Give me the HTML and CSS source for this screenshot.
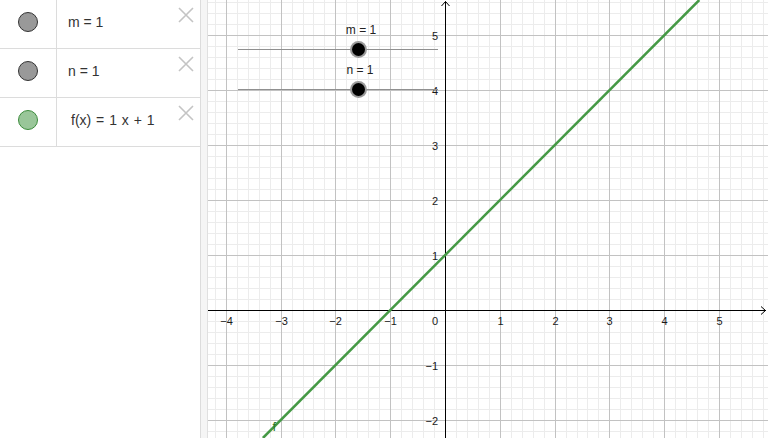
FILE: index.html
```html
<!DOCTYPE html>
<html>
<head>
<meta charset="utf-8">
<link rel="stylesheet" href="styles.css">
</head>
<body>
<div class="app">
  <aside class="algebra">
    <div class="row">
      <div class="marker"><span class="dot dot-gray"></span></div>
      <div class="content">m = 1</div>
      <svg class="close" width="16" height="16" viewBox="0 0 16 16"><path d="M1 1L15 15M15 1L1 15"/></svg>
    </div>
    <div class="row">
      <div class="marker"><span class="dot dot-gray"></span></div>
      <div class="content">n = 1</div>
      <svg class="close" width="16" height="16" viewBox="0 0 16 16"><path d="M1 1L15 15M15 1L1 15"/></svg>
    </div>
    <div class="row">
      <div class="marker"><span class="dot dot-green"></span></div>
      <div class="content content-fx">f(x) = 1 x + 1</div>
      <svg class="close" width="16" height="16" viewBox="0 0 16 16"><path d="M1 1L15 15M15 1L1 15"/></svg>
    </div>
  </aside>
  <div class="splitter"></div>
  <main class="graphics">
    <svg class="plot" width="560" height="438" viewBox="208 0 560 438">
      <path class="grid-minor" d="M215.5 0V438M237.5 0V438M248.5 0V438M259.5 0V438M270.5 0V438M292.5 0V438M303.5 0V438M313.5 0V438M324.5 0V438M346.5 0V438M357.5 0V438M368.5 0V438M379.5 0V438M401.5 0V438M412.5 0V438M423.5 0V438M434.5 0V438M456.5 0V438M467.5 0V438M478.5 0V438M489.5 0V438M511.5 0V438M522.5 0V438M533.5 0V438M544.5 0V438M566.5 0V438M577.5 0V438M587.5 0V438M598.5 0V438M620.5 0V438M631.5 0V438M642.5 0V438M653.5 0V438M675.5 0V438M686.5 0V438M697.5 0V438M708.5 0V438M730.5 0V438M741.5 0V438M752.5 0V438M763.5 0V438
        M208 2.5H768M208 13.5H768M208 24.5H768M208 46.5H768M208 57.5H768M208 68.5H768M208 79.5H768M208 101.5H768M208 112.5H768M208 123.5H768M208 134.5H768M208 156.5H768M208 167.5H768M208 178.5H768M208 189.5H768M208 211.5H768M208 222.5H768M208 233.5H768M208 244.5H768M208 266.5H768M208 277.5H768M208 288.5H768M208 299.5H768M208 321.5H768M208 332.5H768M208 343.5H768M208 354.5H768M208 376.5H768M208 387.5H768M208 398.5H768M208 409.5H768M208 431.5H768"/>
      <path class="grid-major" d="M226.5 0V438M281.5 0V438M335.5 0V438M390.5 0V438M500.5 0V438M555.5 0V438M609.5 0V438M664.5 0V438M719.5 0V438
        M208 35.5H768M208 90.5H768M208 145.5H768M208 200.5H768M208 255.5H768M208 365.5H768M208 420.5H768"/>
      <path class="axis" d="M445.5 1.5V438M208 310.5H766"/>
      <path class="axis-arrow" d="M441.5 6L445.5 1.5L449.5 6M761 306.5L765.5 310.5L761 314.5"/>

      <g class="tick-x">
        <text x="226.5" y="325">−4</text>
        <text x="281.5" y="325">−3</text>
        <text x="335.5" y="325">−2</text>
        <text x="390.5" y="325">−1</text>
        <text x="500.5" y="325">1</text>
        <text x="555.5" y="325">2</text>
        <text x="609.5" y="325">3</text>
        <text x="664.5" y="325">4</text>
        <text x="719.5" y="325">5</text>
      </g>
      <g class="tick-y">
        <text x="438" y="325">0</text>
        <text x="438" y="39.5">5</text>
        <text x="438" y="94.5">4</text>
        <text x="438" y="149.5">3</text>
        <text x="438" y="204.5">2</text>
        <text x="438" y="259.5">1</text>
        <text x="438" y="369.5">−1</text>
        <text x="438" y="424.5">−2</text>
      </g>

      <line class="fn" x1="262.9" y1="438" x2="699.3" y2="0"/>
      <text class="fn-label" x="272.5" y="431">f</text>

      <g class="slider">
        <line class="slider-track" x1="238" y1="49.5" x2="438" y2="49.5"/>
        <circle class="knob-halo" cx="358.5" cy="49.5" r="8.5"/>
        <circle class="knob" cx="358.5" cy="49.5" r="6.5"/>
        <text class="slider-label" x="361" y="34">m = 1</text>
      </g>
      <g class="slider">
        <line class="slider-track" x1="238" y1="89.5" x2="438" y2="89.5"/>
        <circle class="knob-halo" cx="358.5" cy="89.5" r="8.5"/>
        <circle class="knob" cx="358.5" cy="89.5" r="6.5"/>
        <text class="slider-label" x="360" y="74">n = 1</text>
      </g>
    </svg>
  </main>
</div>
</body>
</html>
```

FILE: styles.css
```css
* { box-sizing: border-box; }
html, body {
  margin: 0;
  padding: 0;
  background: #ffffff;
  font-family: "Liberation Sans", Arial, sans-serif;
}
.app {
  display: flex;
  width: 768px;
  height: 438px;
  overflow: hidden;
}
.algebra {
  width: 201px;
  flex: 0 0 201px;
  border-right: 1px solid #dcdcdc;
  background: #ffffff;
}
.row {
  display: flex;
  height: 49px;
  border-bottom: 1px solid #dcdcdc;
}
.marker {
  width: 57px;
  flex: 0 0 57px;
  border-right: 1px solid #dcdcdc;
  padding-top: 12px;
  padding-left: 18px;
}
.dot {
  display: block;
  width: 20px;
  height: 20px;
  border-radius: 50%;
}
.dot-gray {
  background: #999999;
  border: 1px solid #333333;
}
.dot-green {
  background: #99c699;
  border: 1px solid #3c8c3c;
}
.content {
  flex: 1;
  padding-top: 14px;
  padding-left: 11px;
  font-size: 14px;
  line-height: 16px;
  color: #333333;
  white-space: pre;
}
.content-fx {
  padding-top: 14px;
  padding-left: 14px;
  word-spacing: 1px;
}
.close {
  flex: 0 0 16px;
  margin-top: 7px;
  margin-right: 6px;
}
.close path {
  stroke: #c4c4c4;
  stroke-width: 1.6;
  fill: none;
}
.splitter {
  width: 7px;
  flex: 0 0 7px;
  background: #f5f5f5;
  border-right: 1px solid #e0e0e0;
}
.graphics {
  flex: 1;
  position: relative;
  background: #ffffff;
}
.plot {
  display: block;
}
.grid-minor {
  stroke: #ececec;
  stroke-width: 1;
  fill: none;
}
.grid-major {
  stroke: #c2c2c2;
  stroke-width: 1;
  fill: none;
}
.axis {
  stroke: #000000;
  stroke-width: 1;
  fill: none;
}
.axis-arrow {
  stroke: #000000;
  stroke-width: 1;
  fill: none;
}
.tick-x text, .tick-y text {
  font-family: "Liberation Sans", Arial, sans-serif;
  font-size: 11px;
  fill: #1a1a1a;
}
.tick-x text { text-anchor: middle; }
.tick-y text { text-anchor: end; }
.fn {
  stroke: #459945;
  stroke-width: 2.5;
}
.fn-label {
  font-family: "Liberation Sans", Arial, sans-serif;
  font-size: 13px;
  fill: #2a7a2a;
}
.slider-track {
  stroke: #909090;
  stroke-width: 1;
}
.knob-halo {
  fill: #9a9a9a;
}
.knob {
  fill: #000000;
}
.slider-label {
  font-family: "Liberation Sans", Arial, sans-serif;
  font-size: 12px;
  fill: #222222;
  text-anchor: middle;
}
```
